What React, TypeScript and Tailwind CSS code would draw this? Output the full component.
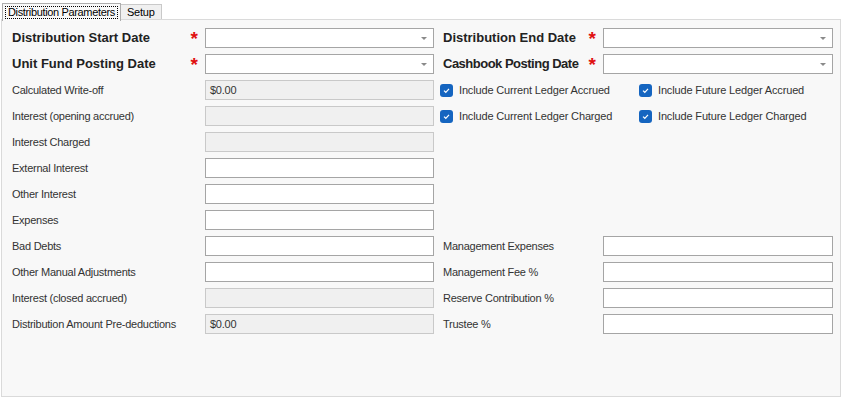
const font = { fontFamily: '"Liberation Sans", Arial, sans-serif' }

type FieldProps = { value?: string; disabled?: boolean; combo?: boolean }

const Field = ({ value = "", disabled = false, combo = false }: FieldProps) => (
  <div
    className={`relative h-[20px] flex items-center px-[3px] border text-[11px] tracking-[-0.25px] text-[#333] ${
      disabled ? "bg-[#f0f0f0] border-[#c9c9c9]" : "bg-white border-[#a5a5a5]"
    }`}
  >
    {value && <span className="pl-[1px]">{value}</span>}
    {combo && (
      <span className="absolute right-[6px] top-[8px] w-0 h-0 border-l-[3px] border-r-[3px] border-t-[3px] border-l-transparent border-r-transparent border-t-[#8a8a8a]" />
    )}
  </div>
)

type LabelProps = { text: string; required?: boolean; bold?: boolean; tight?: boolean }

const Label = ({ text, required = false, bold = false, tight = false }: LabelProps) => (
  <div className="relative flex items-center h-[20px]">
    <span
      className={`whitespace-nowrap ${
        bold
          ? `text-[13px] font-bold text-[#222] ${tight ? "tracking-[-0.5px]" : ""}`
          : "text-[11px] tracking-[-0.25px] text-[#333]"
      }`}
    >
      {text}
    </span>
    {required && (
      <span className="absolute right-[-2px] top-[1px] text-[#e01010] text-[19px] font-bold leading-none">*</span>
    )}
  </div>
)

const Check = ({ text }: { text: string }) => (
  <div className="flex items-center gap-[6px] h-[20px]">
    <span className="flex items-center justify-center w-[13px] h-[13px] rounded-[3px] bg-[#1565c0]">
      <svg width="9" height="9" viewBox="0 0 9 9">
        <path d="M2 4.6 L3.8 6.3 L7 2.8" stroke="white" strokeWidth="1.2" fill="none" />
      </svg>
    </span>
    <span className="text-[11px] tracking-[-0.15px] text-[#333] whitespace-nowrap">{text}</span>
  </div>
)

const leftRows: { label: string; value?: string; disabled?: boolean }[] = [
  { label: "Calculated Write-off", value: "$0.00", disabled: true },
  { label: "Interest (opening accrued)", disabled: true },
  { label: "Interest Charged", disabled: true },
  { label: "External Interest" },
  { label: "Other Interest" },
  { label: "Expenses" },
  { label: "Bad Debts" },
  { label: "Other Manual Adjustments" },
  { label: "Interest (closed accrued)", disabled: true },
  { label: "Distribution Amount Pre-deductions", value: "$0.00", disabled: true },
]

const rightLower = ["Management Expenses", "Management Fee %", "Reserve Contribution %", "Trustee %"]

export default function App() {
  return (
    <div className="w-[843px] h-[398px] bg-white relative" style={font}>
      <div className="flex items-end h-[20px] pl-[2px] pt-[2px]">
        <div className="h-[18px] px-[2px] pt-[2px] border border-b-0 border-[#adadad] bg-[#f9f9f9] relative z-10 -mb-[1px]">
          <div className="px-[2px] h-[13px] flex items-center border border-dotted border-black text-[11px] tracking-[-0.35px] text-black">
            Distribution Parameters
          </div>
        </div>
        <div className="h-[16px] px-[6px] flex items-center border border-b-0 border-l-0 border-[#c9c9c9] bg-[#f0f0f0] text-[11px] tracking-[-0.2px] text-black">
          Setup
        </div>
      </div>
      <div className="absolute left-[1px] top-[19px] w-[840px] h-[378px] border border-[#dadada] bg-[#f8f8f8] pl-[10px] pt-[8px]">
        <div className="grid grid-cols-[184px_229px_151px_230px] gap-x-[9px] gap-y-[6px] w-fit">
          <Label text="Distribution Start Date" required bold />
          <Field combo />
          <Label text="Distribution End Date" required bold />
          <Field combo />

          <Label text="Unit Fund Posting Date" required bold />
          <Field combo />
          <Label text="Cashbook Posting Date" required bold tight />
          <Field combo />

          {leftRows.map((row, i) => (
            <div key={row.label} className="contents">
              <Label text={row.label} />
              <Field value={row.value} disabled={row.disabled} />
              {i === 0 && (
                <div className="col-span-2 grid grid-cols-[199px_1fr] -ml-[3px]">
                  <Check text="Include Current Ledger Accrued" />
                  <Check text="Include Future Ledger Accrued" />
                </div>
              )}
              {i === 1 && (
                <div className="col-span-2 grid grid-cols-[199px_1fr] -ml-[3px]">
                  <Check text="Include Current Ledger Charged" />
                  <Check text="Include Future Ledger Charged" />
                </div>
              )}
              {i >= 2 && i <= 5 && <div className="col-span-2" />}
              {i >= 6 && (
                <>
                  <Label text={rightLower[i - 6]} />
                  <Field />
                </>
              )}
            </div>
          ))}
        </div>
      </div>
    </div>
  )
}
